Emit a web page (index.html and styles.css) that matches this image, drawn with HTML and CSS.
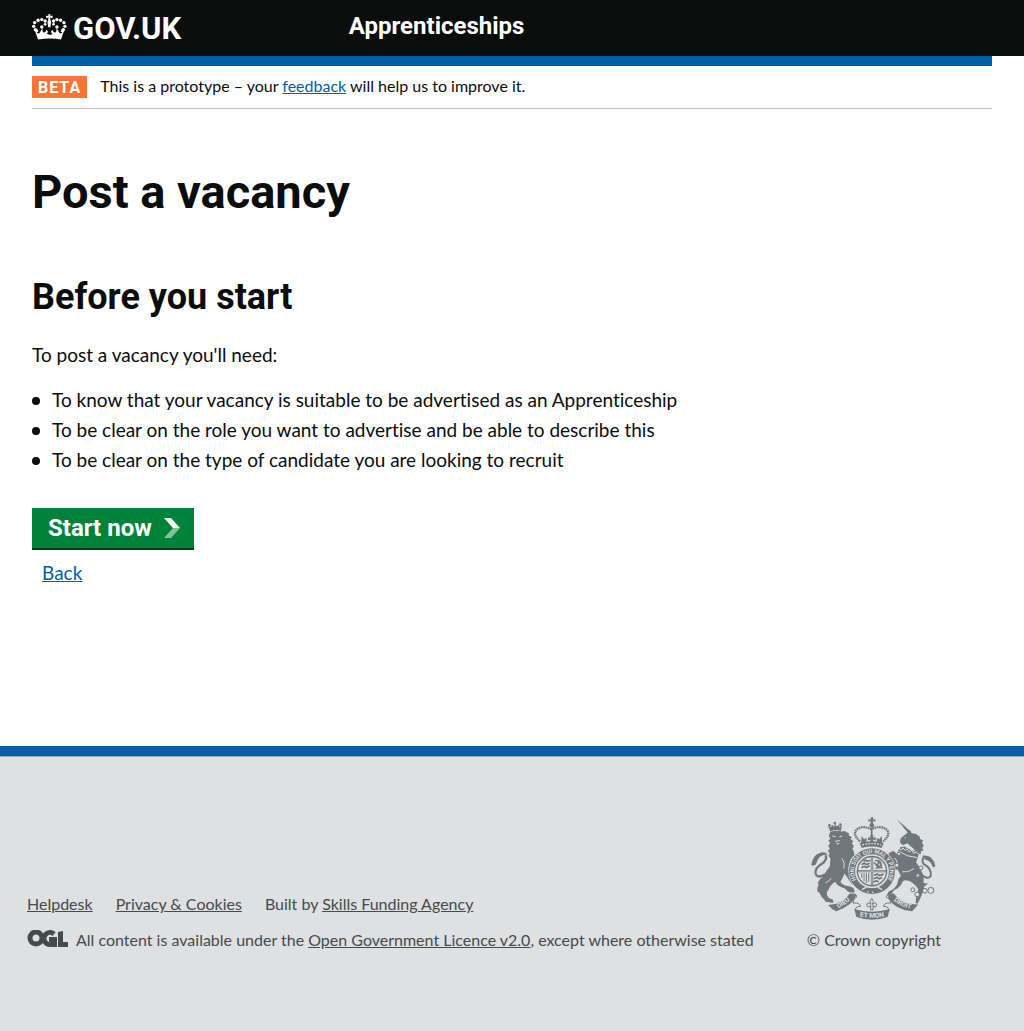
FILE: index.html
```html
<!DOCTYPE html>
<html lang="en">
<head>
<meta charset="utf-8">
<meta name="viewport" content="width=device-width, initial-scale=1">
<title>Post a vacancy</title>
<link rel="stylesheet" href="styles.css">
</head>
<body>
<header class="site-header">
  <div class="header-inner container">
    <a class="logo" href="#">
      <svg class="logo-crown" viewBox="36 42 104 76" aria-hidden="true">
        <g fill="currentColor">
          <path d="M46 86q-3 4 0 9l8 22q34-5 68 0l8-22q4-6 0-10-8 1-9 8 4 1 5 4-8 6-11-4-2-6-7-7 3 8-2 10-8 1-8-7-5 1-6 7 4 0 4 4-4 5-8 3-4-1-8-3 0-4 4-4-1-6-6-7 0 8-8 7-5-2-2-10-5 1-7 7-3 10-11 4 1-3 5-4-1-7-7-7z"/>
          <path d="M84 42h7l-1 6 7-2v8l-7-2 1 9q4 5 1 10l-1 10h-7l-1-10q-3-5 1-10l1-9-7 2v-8l7 2z"/>
          <circle cx="75" cy="62" r="5"/><circle cx="65" cy="58" r="5"/><circle cx="54" cy="60" r="5"/><circle cx="44" cy="67" r="5"/><circle cx="41" cy="78" r="5"/><circle cx="46" cy="88" r="5"/>
          <circle cx="100" cy="62" r="5"/><circle cx="110" cy="58" r="5"/><circle cx="121" cy="60" r="5"/><circle cx="131" cy="67" r="5"/><circle cx="134" cy="78" r="5"/><circle cx="129" cy="88" r="5"/>
          <circle cx="65" cy="80" r="5"/><circle cx="110" cy="80" r="5"/><circle cx="75" cy="72" r="4"/><circle cx="100" cy="72" r="4"/>
        </g>
      </svg>
      <span>GOV.UK</span>
    </a>
    <span class="service-name">Apprenticeships</span>
  </div>
</header>

<main class="content">
  <div class="container">
    <div class="phase-banner">
      <strong class="phase-tag">BETA</strong>
      <span>This is a prototype – your <a href="#">feedback</a> will help us to improve it.</span>
    </div>
    <h1>Post a vacancy</h1>
    <h2>Before you start</h2>
    <p>To post a vacancy you'll need:</p>
    <ul class="bullets">
      <li>To know that your vacancy is suitable to be advertised as an Apprenticeship</li>
      <li>To be clear on the role you want to advertise and be able to describe this</li>
      <li>To be clear on the type of candidate you are looking to recruit</li>
    </ul>
    <button class="button" type="button">Start now
      <svg class="chevron" viewBox="0 0 16 20" aria-hidden="true"><path d="M0 0h7l9 10h-7z" fill="#fff"/><path d="M9 10h7l-9 10H0z" fill="#80c29c"/></svg>
    </button>
    <div class="back"><a href="#">Back</a></div>
  </div>
</main>

<footer class="site-footer">
  <div class="footer-inner container">
    <div class="footer-meta">
      <ul class="footer-links">
        <li><a href="#">Helpdesk</a></li>
        <li><a href="#">Privacy &amp; Cookies</a></li>
        <li>Built by <a href="#">Skills Funding Agency</a></li>
      </ul>
      <div class="licence">
        <svg class="ogl" viewBox="0 0 41 17" role="img" aria-label="OGL">
          <g fill="none" stroke="currentColor" stroke-width="5">
            <circle cx="9" cy="8" r="6"/>
            <path d="M27 4a6 6 0 1 0 0 9"/>
          </g>
          <path fill="currentColor" d="M22 7h8v10h-5v-5h-3zM31 2l5-1v11h5v5H31z"/>
        </svg>
        <span>All content is available under the <a href="#">Open Government Licence v2.0</a>, except where otherwise stated</span>
      </div>
    </div>
    <div class="copyright">
      <svg class="arms" viewBox="36 35 375 310" aria-hidden="true">
        <defs>
          <path id="garter" d="M182 237A54 54 0 1 1 256 237"/>
          <path id="dieu" d="M105 314Q138 303 162 276"/>
          <path id="etmon" d="M170 332Q219 344 268 332"/>
          <path id="droit" d="M276 280Q302 307 346 313"/>
        </defs>
        <!-- lion -->
        <g fill="currentColor">
          <path d="M93 80Q110 74 128 79L136 77L150 85L149 91L159 96L154 101L163 108L158 114L165 123L160 130L164 138L166 150Q150 162 148 190Q150 204 158 218L166 233L160 240Q150 224 140 210L136 205Q130 222 124 230Q130 240 146 243L158 246Q168 252 166 262Q156 264 146 259Q140 250 126 246Q112 240 108 230Q98 236 92 246L83 262Q82 272 88 278L101 284Q104 290 102 293Q92 294 86 290Q78 294 76 284Q66 276 60 262L55 260Q52 250 58 238L56 232Q64 220 74 212Q80 198 92 184L94 160L88 152L92 144L86 138L92 130L87 122L93 114L88 106L94 100L89 92Z"/>
          <path d="M93 79L87 62L95 66L99 58L105 64L108 52L112 64L118 58L121 65L129 61L125 77Q108 70 93 79z"/>
          <circle cx="91" cy="60" r="4"/><circle cx="107" cy="53" r="4"/><circle cx="124" cy="58" r="4"/>
          <path d="M36 181Q40 150 60 144Q76 136 86 148Q72 148 62 155Q54 164 50 178Q44 182 36 181z"/>
        </g>
        <path d="M80 150Q84 165 68 176Q44 190 50 208Q58 222 84 204" fill="none" stroke="currentColor" stroke-width="7"/>
        <path d="M100 92l10 3M121 95l8-3M108 108l14-2M112 113q6 8 8 0M128 160q10 10 6 30M96 220q-6 9-17 13" fill="none" stroke="#dee0e2" stroke-width="3"/>
        <!-- unicorn -->
        <g fill="currentColor">
          <path d="M293 41L337 80L330 86z"/>
          <path d="M306 98L324 84L333 74L338 84L352 86L362 94L364 101L373 106L369 113L375 121L370 128L374 136L366 138L366 147L352 142L342 128L334 122L326 114L314 119L306 116L303 108z"/>
          <path d="M304 126L316 124L336 134L358 142Q362 150 356 158L352 172Q366 188 372 208Q376 222 374 234L388 236L376 244Q374 262 366 276Q362 286 356 296L350 294L352 276Q358 264 358 252Q352 240 336 230Q322 222 312 228Q308 240 296 250L286 254L276 268L264 272L268 260L280 254Q294 244 296 232Q298 220 306 212Q300 200 296 192L284 196Q276 196 274 190L280 182L272 172L268 160Q266 144 274 142Q282 134 288 140L294 148L298 136z"/>
          <path d="M370 152Q402 146 410 184L402 186Q396 166 380 164z"/>
        </g>
        <path d="M300 130l8 4 4-6 7 8 6-5 6 9 8-5 5 9 8-4 5 6M299 138Q326 156 354 157M286 158q12 8 8 22M284 168l-8 2M346 190q-20 14-36 10" fill="none" stroke="#dee0e2" stroke-width="3"/>
        <path d="M374 156Q366 174 380 180Q398 192 396 212Q386 226 368 208" fill="none" stroke="currentColor" stroke-width="6"/>
        <g fill="#dee0e2" stroke="currentColor" stroke-width="3">
          <circle cx="342" cy="254" r="6"/><circle cx="355" cy="268" r="7"/><circle cx="378" cy="257" r="7"/><circle cx="396" cy="256" r="9"/><circle cx="366" cy="188" r="6"/><circle cx="357" cy="211" r="5"/><circle cx="294" cy="180" r="6"/><circle cx="300" cy="146" r="5"/>
        </g>
        <circle cx="319" cy="97" r="2" fill="#dee0e2"/>
        <!-- motto scroll -->
        <path d="M87 300Q130 298 152 265L172 270Q162 300 112 319Q96 312 87 300zM268 268L286 266Q306 298 358 298L340 319Q290 314 268 280z" fill="currentColor"/>
        <path d="M166 313Q219 328 272 313L266 336Q219 352 172 336z" fill="currentColor"/>
        <path d="M152 268Q174 262 172 276Q160 284 162 294Q184 292 184 304Q168 304 168 318M286 268Q264 262 262 276Q278 284 276 294Q254 292 254 304Q270 304 270 318" fill="none" stroke="currentColor" stroke-width="3"/>
        <!-- garter -->
        <circle cx="219" cy="198" r="71" fill="#dee0e2"/>
        <circle cx="219" cy="198" r="60" fill="none" stroke="currentColor" stroke-width="18"/>
        <circle cx="219" cy="198" r="44" fill="#dee0e2" stroke="currentColor" stroke-width="4"/>
        <!-- quartered shield -->
        <g fill="none" stroke="currentColor">
          <path d="M219 156v84M177 198h84" stroke-width="7"/>
          <path d="M187 188l8-5 7 4 10-5M187 178l9-4 6 4 10-4M193 168l7-3 6 3 8-3M225 171l10 12 5-15 7 12-12 8 16-1M229 165l13 4 5 8M225 211l10-4 7 4 12-4M224 221l10-4 7 4 9-4M223 231l9-4 7 3" stroke-width="5"/>
          <path d="M188 204v14M195 204v24M202 204v30M209 204v26" stroke-width="3"/>
        </g>
        <path d="M219 157v82M178 198h82" stroke="#dee0e2" stroke-width="2"/>
        <path d="M188 254l14-8M250 254l-14-8M205 259l3 3M219 262h4" stroke="#dee0e2" stroke-width="4"/>
        <!-- royal crown -->
        <path d="M182 114q37-12 72 0l-6 14q-29-9-60 0z" fill="currentColor"/>
        <path d="M183 108Q160 88 172 74Q190 58 216 72Q246 58 264 74Q276 88 253 108" fill="none" stroke="currentColor" stroke-width="7" stroke-dasharray="5 2"/>
        <path d="M218 66v45" stroke="currentColor" stroke-width="5"/>
        <path d="M215 36h8l-1 7 7-2v8l-7-2v7q7 7 1 12h-9q-6-6 1-12v-7l-7 2v-8l7 2zM213 90h11l-2 8 8-3v11l-8-3 2 9h-11l2-9-8 3V95l8 3zM188 92l7 10 8-4-1 15-16 2zM248 92l-7 10-8-4 1 15 16 2z" fill="currentColor"/>
        <path d="M190 119q29-8 57 0" fill="none" stroke="#dee0e2" stroke-width="4" stroke-dasharray="5 4"/>
        <path d="M218 280q10 10 2 18 13-9 13 2 0 6-7 6l-4-5v14h-7v-14l-4 5q-8 0-8-6 1-11 13-2-7-8 2-18z" fill="none" stroke="currentColor" stroke-width="3"/>
        <g class="motto">
          <text class="motto-garter"><textPath href="#garter" startOffset="50%">HONI SOIT QUI MAL Y PENSE</textPath></text>
          <text><textPath href="#dieu" startOffset="50%">DIEU</textPath></text>
          <text><textPath href="#etmon" startOffset="50%">ET MON</textPath></text>
          <text><textPath href="#droit" startOffset="50%">DROIT</textPath></text>
        </g>
      </svg>
      <span>© Crown copyright</span>
    </div>
  </div>
</footer>
</body>
</html>
```

FILE: styles.css
```css
* { box-sizing: border-box; }
body {
  margin: 0;
  min-height: 100vh;
  display: flex;
  flex-direction: column;
  background: #dee0e2;
  color: #0b0c0c;
  font-family: Lato, "Liberation Sans", sans-serif;
  font-size: 19px;
  line-height: 25px;
  font-variant-ligatures: none;
}
a { color: #005ea5; }
h1, h2, .logo, .service-name, .phase-tag, .button, .motto { font-family: Roboto, "Liberation Sans", sans-serif; }
.container { max-width: 1024px; width: 100%; margin: 0 auto; padding: 0 32px; }

.site-header { background: #0b0c0c; color: #fff; }
.header-inner { display: flex; height: 56px; }
.logo {
  display: flex;
  align-items: flex-start;
  gap: 6px;
  width: 33%;
  padding-top: 14px;
  color: #fff;
  font-size: 31px;
  font-weight: 700;
  line-height: 30px;
  text-decoration: none;
}
.logo-crown { width: 35px; height: 26px; }
.service-name { padding-top: 11px; font-size: 24px; font-weight: 700; line-height: 30px; }

.content { background: #fff; padding-bottom: 161px; }
.phase-banner {
  display: flex;
  align-items: flex-start;
  gap: 13px;
  padding: 10px 0;
  border-top: 10px solid #005ea5;
  border-bottom: 1px solid #bfc1c3;
  font-size: 16px;
  line-height: 20px;
}
.phase-tag {
  padding: 2px 6px 0;
  background: #f47738;
  color: #fff;
  letter-spacing: 1px;
}
h1 { margin: 58px 0 0; font-size: 47px; line-height: 50px; }
h2 { margin: 60px 0 0; font-size: 36px; line-height: 40px; }
p { margin: 25px 0 0; }
.bullets { margin: 20px 0 36px; padding-left: 20px; list-style: none; }
.bullets li { margin-bottom: 5px; }
.bullets li::before {
  content: "";
  display: inline-block;
  width: 8px;
  height: 8px;
  margin: 0 12px 2px -20px;
  border-radius: 50%;
  background: #0b0c0c;
}
.button {
  display: flex;
  align-items: center;
  gap: 12px;
  height: 42px;
  padding: 0 14px 0 16px;
  border: 0;
  border-bottom: 2px solid #003618;
  background: #00823b;
  color: #fff;
  font-size: 24px;
  font-weight: 700;
  line-height: 30px;
}
.chevron { width: 16px; height: 20px; }
.back { padding: 10px 10px 0; }

.site-footer {
  border-top: 10px solid #005ea5;
  color: #454a4c;
  font-size: 16px;
  line-height: 20px;
}
.site-footer a { color: #454a4c; }
.footer-inner {
  display: flex;
  justify-content: space-between;
  align-items: flex-end;
  padding: 60px 83px 80px 27px;
  border-top: 1px solid #a1acb2;
}
.footer-links { display: flex; gap: 23px; margin: 0 0 16px; padding: 0; list-style: none; }
.licence { display: flex; gap: 8px; }
.ogl { flex: none; width: 41px; height: 17px; }
.copyright { display: flex; flex-direction: column; align-items: center; gap: 10px; }
.arms { width: 125px; height: 103px; color: #6f777b; }
.motto { fill: #dee0e2; font-size: 20px; font-weight: 700; text-anchor: middle; }
.motto-garter { font-size: 17px; }
```
